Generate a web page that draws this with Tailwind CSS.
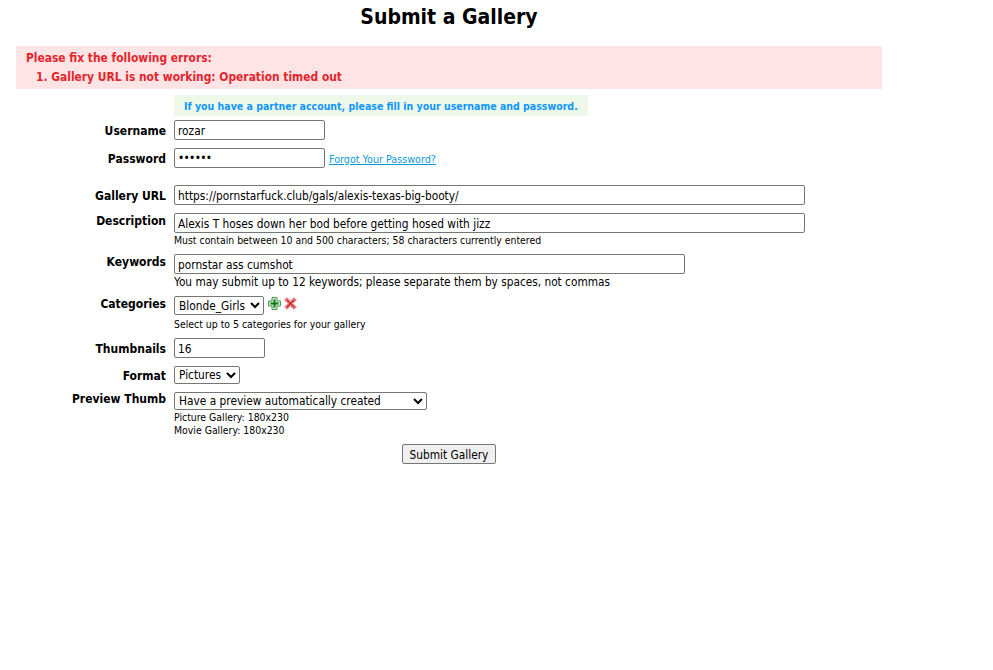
<!DOCTYPE html>
<html lang="en">
<head>
<meta charset="utf-8">
<title>Submit a Gallery</title>
<script src="https://cdn.jsdelivr.net/npm/@tailwindcss/browser@4"></script>
</head>
<body class="bg-white text-black font-['DejaVu_Sans_Condensed','DejaVu_Sans',sans-serif] text-[12px]">
<div class="ml-[16px] w-[866px] h-[670px] overflow-hidden">
  <h1 class="h-[46px] pt-[4px] text-center text-[21px] leading-[27px] font-bold">Submit a Gallery</h1>
  <div class="h-[43px] bg-[#ffe4e6] pl-[10px] pt-[3px] text-[11.9px] leading-[19px] font-bold text-[#e3242b]">
    <div>Please fix the following errors:</div>
    <div class="pl-[10px]">1. Gallery URL is not working: Operation timed out</div>
  </div>

  <div class="grid grid-cols-[150px_1fr] gap-x-[8px] mt-[6px]">
    <div></div>
    <div class="w-[414px] h-[21px] bg-[#eef8e8] pl-[10px] text-[10.5px] leading-[23px] font-bold text-[#0f96ff] whitespace-nowrap">If you have a partner account, please fill in your username and password.</div>

    <label class="mt-[6px] text-right text-[12px] leading-[18px] font-bold">Username</label>
    <div class="mt-[4px]"><input class="block w-[151px] h-[20px] border border-[#767676] rounded-[2px] px-[3px] pt-[2px] text-[11.8px]" value="rozar"></div>

    <label class="mt-[10px] text-right text-[12px] leading-[18px] font-bold">Password</label>
    <div class="mt-[8px] flex items-center gap-[4px]">
      <input type="password" class="block w-[151px] h-[20px] border border-[#767676] rounded-[2px] px-[3px] text-[11.8px] tracking-[-0.7px]" value="rozar1">
      <a class="text-[10.7px] underline text-[#0d9ad6] mt-[4px]" href="#">Forgot Your Password?</a>
    </div>

    <label class="mt-[19px] text-right text-[12px] leading-[18px] font-bold">Gallery URL</label>
    <div class="mt-[17px]"><input class="block w-[631px] h-[20px] border border-[#767676] rounded-[2px] px-[3px] pt-[2px] text-[11.8px]" value="https://pornstarfuck.club/gals/alexis-texas-big-booty/"></div>

    <label class="mt-[8px] text-right text-[12px] leading-[16px] font-bold">Description</label>
    <div class="mt-[8px]">
      <input class="block w-[631px] h-[20px] border border-[#767676] rounded-[2px] px-[3px] pt-[2px] text-[11.8px]" value="Alexis T hoses down her bod before getting hosed with jizz">
      <p class="mt-[1px] text-[10.4px] leading-[13px]">Must contain between 10 and 500 characters; 58 characters currently entered</p>
    </div>

    <label class="mt-[7px] text-right text-[12px] leading-[16px] font-bold">Keywords</label>
    <div class="mt-[7px]">
      <input class="block w-[511px] h-[20px] border border-[#767676] rounded-[2px] px-[3px] pt-[2px] text-[11.8px]" value="pornstar ass cumshot">
      <p class="pt-[1px] text-[11.75px] leading-[15px] h-[15px]">You may submit up to 12 keywords; please separate them by spaces, not commas</p>
    </div>

    <label class="mt-[7px] text-right text-[12px] leading-[16px] font-bold">Categories</label>
    <div class="mt-[7px]">
      <div class="flex items-start gap-[4px] h-[19px]">
        <select class="block w-[90px] h-[19px] border border-[#767676] rounded-[2px] text-[11.8px] bg-white"><option>Blonde_Girls</option></select>
        <svg class="mt-[1px]" width="13" height="13" viewBox="0 0 13 13" aria-hidden="true"><path d="M4 .5h5v3.500h3.500v5H9v3.500H4V9H.5V4H4z" fill="#cfe8cf" stroke="#4f9a55" stroke-width="1"/><path d="M5.500 2.500h2v3h3v2h-3v3h-2v-3h-3v-2h3z" fill="#0c7a14"/></svg>
        <svg class="mt-[1px] -ml-[1px]" width="13" height="13" viewBox="0 0 13 13" aria-hidden="true"><path d="M3 .7 6.500 4.200 10 .7 12.300 3 8.800 6.500 12.300 10 10 12.300 6.500 8.800 3 12.300 .7 10 4.200 6.500 .7 3z" fill="#f6c4c4" stroke="#d96a6a" stroke-width="1"/><path d="M3 2 6.500 5.500 10 2 11 3 7.500 6.500 11 10 10 11 6.500 7.500 3 11 2 10 5.500 6.500 2 3z" fill="#d3161c"/></svg>
      </div>
      <p class="mt-[3px] text-[10.4px] leading-[13px]">Select up to 5 categories for your gallery</p>
    </div>

    <label class="mt-[9px] text-right text-[12px] leading-[18px] font-bold">Thumbnails</label>
    <div class="mt-[7px]"><input class="block w-[91px] h-[20px] border border-[#767676] rounded-[2px] px-[3px] pt-[2px] text-[11.8px]" value="16"></div>

    <label class="mt-[10px] text-right text-[12px] leading-[16px] font-bold">Format</label>
    <div class="mt-[8px]"><select class="block w-[66px] h-[18px] border border-[#767676] rounded-[2px] text-[11.8px] bg-white"><option>Pictures</option></select></div>

    <label class="mt-[8px] text-right text-[12px] leading-[15px] font-bold">Preview Thumb</label>
    <div class="mt-[8px]">
      <select class="block w-[253px] h-[18px] border border-[#767676] rounded-[2px] text-[11.8px] bg-white"><option>Have a preview automatically created</option></select>
      <p class="mt-[1px] text-[10.4px] leading-[13px]">Picture Gallery: 180x230</p>
      <p class="text-[10.4px] leading-[13px]">Movie Gallery: 180x230</p>
    </div>
  </div>
  <div class="mt-[7px] flex justify-center">
    <button class="w-[94px] h-[20px] border border-[#767676] rounded-[2px] bg-[#efefef] pt-[1px] text-[11.8px] leading-[18px]">Submit Gallery</button>
  </div>
</div>
</body>
</html>
